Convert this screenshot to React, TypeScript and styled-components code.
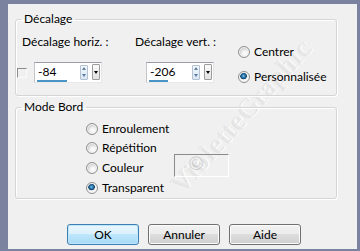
import React from "react";
import styled, { createGlobalStyle } from "styled-components";

const GlobalStyle = createGlobalStyle`
  html, body {
    margin: 0;
    padding: 0;
    background: #7b82a0;
  }
  body {
    font-family: Lato, "Open Sans", sans-serif;
    font-size: 12px;
    color: #000;
  }
`;

const Frame = styled.div`
  width: 360px;
  height: 251px;
  box-sizing: border-box;
  padding: 4px 3px 2px 8px;
  background: #7b82a0;
`;

const Panel = styled.div`
  position: relative;
  width: 349px;
  height: 245px;
  box-sizing: border-box;
  background: #f0f0f0;
  padding: 7px 0 0 7px;
  display: flex;
  flex-direction: column;
  overflow: hidden;
`;

const Group = styled.fieldset<{ $height: number }>`
  position: relative;
  z-index: 1;
  margin: 0;
  padding: 0;
  min-width: 0;
  width: 322px;
  height: ${(p) => p.$height}px;
  box-sizing: border-box;
  border: 1px solid #d5d5d5;
  border-radius: 3px;
  box-shadow: inset 1px 1px 0 #fff, 1px 1px 0 #fff;

  & + & {
    margin-top: 3px;
  }
`;

const Legend = styled.legend`
  margin-left: 5px;
  padding: 0 3px;
  line-height: 16px;
`;

const OffsetRow = styled.div`
  display: flex;
  margin-top: 7px;
`;

const Field = styled.div<{ $width: number }>`
  width: ${(p) => p.$width}px;
  display: flex;
  flex-direction: column;
`;

const FieldLabel = styled.div<{ $indent: number }>`
  margin-left: ${(p) => p.$indent}px;
  line-height: 16px;
  white-space: nowrap;
`;

const InputRow = styled.div<{ $indent: number }>`
  display: flex;
  align-items: center;
  margin-top: 12px;
  margin-left: ${(p) => p.$indent}px;
`;

const Checkbox = styled.span`
  width: 10px;
  height: 10px;
  box-sizing: border-box;
  margin: 0 7px 0 1px;
  border-top: 1px solid #8a8a8a;
  border-left: 1px solid #8a8a8a;
  border-right: 1px solid #fafafa;
  border-bottom: 1px solid #fafafa;
`;

const Spin = styled.div`
  position: relative;
  width: 68px;
  height: 21px;
  box-sizing: border-box;
  background: #fff;
  border-top: 1px solid #9a9da4;
  border-left: 1px solid #c4c6cb;
  border-right: 1px solid #e3e5e8;
  border-bottom: 1px solid #e8e9ec;
  display: flex;
  align-items: center;
  padding: 0 3px;
`;

const SpinValue = styled.span`
  flex: 1;
  line-height: 16px;
  margin-top: -1px;
`;

const Underline = styled.span`
  position: absolute;
  left: 2px;
  bottom: 0;
  height: 2px;
  background: #4a94c6;
`;

const Arrows = styled.span`
  width: 8px;
  height: 15px;
  box-sizing: border-box;
  border: 1px solid #b3c2d2;
  border-radius: 1px;
  background: linear-gradient(#f6f9fc, #d8e6f2);
  display: flex;
  flex-direction: column;
  align-items: center;
  justify-content: space-around;
  margin-right: 4px;
  margin-top: -1px;
`;

const Tri = styled.span<{ $up?: boolean; $color: string }>`
  width: 0;
  height: 0;
  border-left: 2.5px solid transparent;
  border-right: 2.5px solid transparent;
  ${(p) =>
    p.$up
      ? `border-bottom: 3px solid ${p.$color};`
      : `border-top: 3px solid ${p.$color};`}
`;

const Drop = styled.span`
  width: 8px;
  height: 16px;
  box-sizing: border-box;
  border: 1px solid #9c9c9c;
  border-radius: 1px;
  background: linear-gradient(#fafafa, #e2e2e2);
  display: flex;
  align-items: center;
  justify-content: center;
  margin-right: -2px;
  margin-top: -1px;
`;

const RadioCol = styled.div`
  display: flex;
  flex-direction: column;
  gap: 9px;
  margin-top: 10px;
  margin-left: 3px;
`;

const RadioRow = styled.label`
  display: flex;
  align-items: center;
  gap: 4px;
  line-height: 16px;
  white-space: nowrap;
`;

const RadioDot = styled.span<{ $checked?: boolean }>`
  width: 12px;
  height: 12px;
  box-sizing: border-box;
  border-radius: 50%;
  border: 1px solid #8e8f8f;
  background: ${(p) =>
    p.$checked
      ? "radial-gradient(circle at 45% 40%, #7cc3ec 0, #1f6b9e 2px, #0f3f66 3px, #e8e8e8 3.6px, #fdfdfd 5px)"
      : "radial-gradient(circle at 60% 65%, #fefefe 0, #f0f0f0 3px, #d4d4d4 5px)"};
  box-shadow: inset 0 0 0 1px #f4f4f4;
`;

const BordGrid = styled.div`
  display: grid;
  grid-template-columns: 88px 56px;
  grid-template-rows: repeat(4, 19.67px);
  margin: 4px 0 0 70px;
`;

const Swatch = styled.span`
  grid-column: 2;
  grid-row: 2 / 4;
  align-self: end;
  margin-bottom: 1px;
  width: 55px;
  height: 23px;
  box-sizing: border-box;
  border-top: 1px solid #8a8a8a;
  border-left: 1px solid #8a8a8a;
  border-right: 1px solid #fff;
  border-bottom: 1px solid #fff;
`;

const ButtonBar = styled.div`
  display: flex;
  gap: 9px;
  margin: 25px 0 0 52px;
`;

const Button = styled.button<{ $default?: boolean }>`
  width: 72px;
  height: 21px;
  padding: 0;
  font: inherit;
  color: #000;
  border-radius: 3px;
  border: 1px solid ${(p) => (p.$default ? "#3c7fb1" : "#707070")};
  background: ${(p) =>
    p.$default
      ? "linear-gradient(#eaf6fd 0, #d9f0fc 50%, #bee6fd 50%, #a7d9f5 100%)"
      : "linear-gradient(#f2f2f2 0, #ebebeb 50%, #dddddd 50%, #cfcfcf 100%)"};
  box-shadow: inset 0 0 0 1px ${(p) => (p.$default ? "#bfe6fa" : "#fcfcfc")};
  line-height: 19px;
`;

// faint diagonal signature under the dialog's controls
const Watermark = styled.div`
  position: absolute;
  z-index: 0;
  left: 168px;
  top: 170px;
  transform: rotate(-48deg);
  transform-origin: left center;
  font-family: "Liberation Serif", serif;
  font-size: 27px;
  line-height: 28px;
  letter-spacing: 1.6px;
  color: #e8e8e8;
  text-shadow: 1px 1px 0 #ffffff, -1px 0 0 #e0e0e0;
  white-space: nowrap;
  pointer-events: none;
`;

const Copy = styled.span`
  position: absolute;
  z-index: 2;
  left: 180px;
  top: 149px;
  font-family: "Liberation Serif", serif;
  font-size: 20px;
  line-height: 20px;
  color: #c8c8c8;
  transform: rotate(-48deg);
  pointer-events: none;
`;

type SpinProps = { value: string; bar: number };

const SpinBox = ({ value, bar }: SpinProps) => (
  <Spin>
    <SpinValue>{value}</SpinValue>
    <Arrows>
      <Tri $up $color="#5b7ea3" />
      <Tri $color="#5b7ea3" />
    </Arrows>
    <Drop>
      <Tri $color="#000" />
    </Drop>
    <Underline style={{ width: bar }} />
  </Spin>
);

const Radio = ({ label, checked }: { label: string; checked?: boolean }) => (
  <RadioRow>
    <RadioDot $checked={checked} />
    {label}
  </RadioRow>
);

export default function App() {
  return (
    <>
      <GlobalStyle />
      <Frame>
        <Panel>
          <Group $height={85}>
            <Legend>Décalage</Legend>
            <OffsetRow>
              <Field $width={119}>
                <FieldLabel $indent={6}>Décalage horiz. :</FieldLabel>
                <InputRow $indent={0}>
                  <Checkbox />
                  <SpinBox value="-84" bar={30} />
                </InputRow>
              </Field>
              <Field $width={100}>
                <FieldLabel $indent={0}>Décalage vert. :</FieldLabel>
                <InputRow $indent={11}>
                  <SpinBox value="-206" bar={19} />
                </InputRow>
              </Field>
              <RadioCol>
                <Radio label="Centrer" />
                <Radio label="Personnalisée" checked />
              </RadioCol>
            </OffsetRow>
          </Group>
          <Group $height={100}>
            <Legend>Mode Bord</Legend>
            <BordGrid>
              <Radio label="Enroulement" />
              <span />
              <Radio label="Répétition" />
              <Swatch />
              <Radio label="Couleur" />
              <Radio label="Transparent" checked />
            </BordGrid>
          </Group>
          <ButtonBar>
            <Button $default>OK</Button>
            <Button>Annuler</Button>
            <Button>Aide</Button>
          </ButtonBar>
          <Watermark>VioletteGraphic</Watermark>
          <Copy>©</Copy>
        </Panel>
      </Frame>
    </>
  );
}
